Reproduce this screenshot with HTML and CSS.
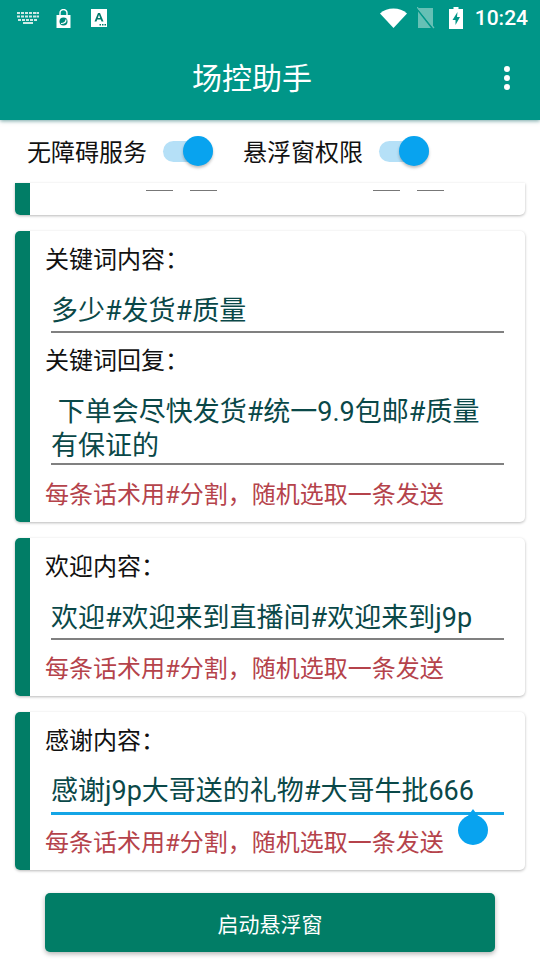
FILE: index.html
```html
<!DOCTYPE html>
<html lang="zh-CN">
<head>
    <meta charset="UTF-8">
    <meta name="viewport" content="width=device-width, initial-scale=1.0">
    <title>场控助手</title>
    <link rel="stylesheet" href="styles.css">
</head>
<body>

<!-- Status bar and toolbar -->
<header class="app-header">
    <div class="status-bar">
        <div class="status-left">
            <svg class="icon-keyboard" width="22" height="12" viewBox="0 0 22 12">
                <g fill="#cfeae6">
                    <rect x="0" y="0" width="3" height="2"/><rect x="4" y="0" width="3" height="2"/><rect x="8" y="0" width="3" height="2"/><rect x="12" y="0" width="3" height="2"/><rect x="16" y="0" width="3" height="2"/><rect x="19.5" y="0" width="2.5" height="2"/>
                    <rect x="0" y="3.5" width="3" height="2"/><rect x="4" y="3.5" width="3" height="2"/><rect x="8" y="3.5" width="3" height="2"/><rect x="12" y="3.5" width="3" height="2"/><rect x="16" y="3.5" width="3" height="2"/><rect x="19.5" y="3.5" width="2.5" height="2"/>
                    <rect x="1" y="7" width="3" height="2"/><rect x="5" y="7" width="3" height="2"/><rect x="9" y="7" width="3" height="2"/><rect x="13" y="7" width="3" height="2"/><rect x="17" y="7" width="3" height="2"/>
                    <rect x="6" y="10" width="10" height="2"/>
                </g>
            </svg>
            <svg class="icon-bag" width="15" height="19" viewBox="0 0 15 19">
                <path d="M4 6V4a3.500 3.500 0 0 1 7 0v2" fill="none" stroke="#fff" stroke-width="1.400"/>
                <path d="M.5 6h14v13H.5z" fill="#fff"/>
                <circle cx="7.500" cy="12.500" r="4" fill="#00897b"/>
                <path d="M5 14.500c3.500 0 5-1.500 5-4" fill="none" stroke="#fff" stroke-width="1.200"/>
            </svg>
            <svg class="icon-app" width="16" height="18" viewBox="0 0 16 18">
                <rect width="16" height="18" fill="#fff"/>
                <path d="M3.500 12.500L7 4h2l3.500 8.500h-2L9.800 10.500H6.200l-.7 2zM6.800 9h2.400L8 5.800z" fill="#00796b"/>
                <rect x="8.500" y="15" width="1.500" height="1.500" fill="#00796b"/><rect x="11" y="15" width="1.500" height="1.500" fill="#00796b"/><rect x="13.500" y="15" width="1.500" height="1.500" fill="#00796b"/>
            </svg>
        </div>
        <div class="status-right">
            <svg class="icon-wifi" width="27" height="20" viewBox="0 0 27 20">
                <path d="M0 5.500C3.500 2 8.500 .5 13.500 .5s10 1.500 13.500 5L13.500 20z" fill="#fff"/>
            </svg>
            <svg class="icon-sim" width="18" height="22" viewBox="0 0 18 22">
                <path d="M1 1h15v20H1z" fill="#66c0b5"/>
                <path d="M1 3l15 19" stroke="#009688" stroke-width="2"/>
                <path d="M0 0l17 21" stroke="#66c0b5" stroke-width="1.300"/>
            </svg>
            <svg class="icon-battery" width="14" height="22" viewBox="0 0 14 22">
                <path d="M4.500 0h5v2H14v20H0V2h4.500z" fill="#fff"/>
                <path d="M8.500 5L3.500 13h3v5l4.500-8H8z" fill="#009688"/>
            </svg>
            <span class="status-time">10:24</span>
        </div>
    </div>
    <div class="toolbar">
        <h1 class="toolbar-title">场控助手</h1>
        <div class="menu-dots"><i></i><i></i><i></i></div>
    </div>
</header>

<!-- Permission switches -->
<div class="switch-row">
    <span class="switch-label">无障碍服务</span>
    <span class="switch"><span class="switch-thumb"></span></span>
    <span class="switch-label second">悬浮窗权限</span>
    <span class="switch"><span class="switch-thumb"></span></span>
</div>

<!-- Settings cards -->
<main class="card-list">
    <section class="card card-clipped">
        <div class="dash-row">
            <span class="dash"></span><span class="dash"></span>
            <span class="dash dash-far"></span><span class="dash"></span>
        </div>
    </section>

    <section class="card">
        <div class="card-label">关键词内容&#xFF1A;</div>
        <div class="field">多少#发货#质量</div>
        <div class="card-label label-next">关键词回复&#xFF1A;</div>
        <div class="field field-multi">&nbsp;下单会尽快发货#统一9.9包邮#质量有保证的</div>
        <div class="hint">每条话术用#分割&#xFF0C;随机选取一条发送</div>
    </section>

    <section class="card">
        <div class="card-label">欢迎内容&#xFF1A;</div>
        <div class="field">欢迎#欢迎来到直播间#欢迎来到j9p</div>
        <div class="hint">每条话术用#分割&#xFF0C;随机选取一条发送</div>
    </section>

    <section class="card">
        <div class="card-label">感谢内容&#xFF1A;</div>
        <div class="field field-active">感谢j9p大哥送的礼物#大哥牛批666
            <span class="cursor-handle"></span>
        </div>
        <div class="hint hint-active">每条话术用#分割&#xFF0C;随机选取一条发送</div>
    </section>
</main>

<button class="start-btn">启动悬浮窗</button>

</body>
</html>
```

FILE: styles.css
```css
/* Page */
* {
    box-sizing: border-box;
}

html, body {
    margin: 0;
    height: 960px;
    overflow: hidden;
}

body {
    background-color: #fff;
    font-family: Roboto, "Noto Sans CJK SC", sans-serif;
    color: #111;
}

/* Header */
.app-header {
    position: relative;
    height: 120px;
    background-color: #009688;
    box-shadow: 0 1px 4px rgba(0, 90, 90, 0.55);
    z-index: 2;
}

.status-bar {
    height: 40px;
    display: flex;
    justify-content: space-between;
    align-items: center;
    padding: 0 12px 4px 17px;
}

.status-left, .status-right {
    display: flex;
    align-items: center;
}

.icon-bag {
    margin-left: 17px;
}

.icon-app {
    margin-left: 20px;
}

.icon-sim {
    margin-left: 10px;
}

.icon-battery {
    margin-left: 14px;
}

.status-time {
    margin-left: 12px;
    font-size: 21px;
    font-weight: 500;
    color: #fff;
}

.toolbar {
    position: relative;
    height: 80px;
    display: flex;
    justify-content: center;
    align-items: center;
    padding: 0 36px 2px 0;
}

.toolbar-title {
    margin: 0;
    font-size: 30px;
    font-weight: 400;
    line-height: 40px;
    color: #fff;
}

.menu-dots {
    position: absolute;
    top: 26px;
    right: 30px;
    display: flex;
    flex-direction: column;
    gap: 3px;
}

.menu-dots i {
    width: 6px;
    height: 6px;
    border-radius: 50%;
    background-color: #fff;
}

/* Switch row */
.switch-row {
    height: 63px;
    display: flex;
    align-items: center;
    padding: 0 0 0 27px;
}

.switch-label {
    padding-top: 2px;
    font-size: 24px;
    line-height: 34px;
}

.switch-label.second {
    margin-left: 30px;
}

.switch {
    position: relative;
    width: 50px;
    height: 21px;
    margin-left: 16px;
    border-radius: 11px;
    background-color: #b5e0f7;
}

.switch-thumb {
    position: absolute;
    top: -5px;
    right: 0;
    width: 30px;
    height: 30px;
    border-radius: 50%;
    background-color: #08a3ef;
    box-shadow: 0 2px 3px rgba(0, 0, 0, 0.25);
}

/* Cards */
.card-list {
    display: flex;
    flex-direction: column;
    gap: 16px;
    padding: 0 15px;
}

.card {
    position: relative;
    padding: 11px 20px 9px 30px;
    background-color: #fff;
    border-radius: 5px;
    box-shadow: 0 1px 3px rgba(0, 0, 0, 0.28);
}

.card::before {
    content: "";
    position: absolute;
    top: 0;
    bottom: 0;
    left: 0;
    width: 15px;
    background-color: #017d66;
    border-radius: 5px 0 0 5px;
}

.card-clipped {
    height: 32px;
    padding: 0;
    border-radius: 0 0 5px 5px;
}

.card-clipped::before {
    border-radius: 0 0 0 5px;
}

.dash-row {
    display: flex;
    padding: 7px 0 0 131px;
}

.dash {
    width: 27px;
    height: 1px;
    margin-right: 17px;
    background-color: #777;
}

.dash-far {
    margin-left: 139px;
}

.card-label {
    font-size: 24px;
    line-height: 36px;
}

.label-next {
    margin-top: 10px;
}

.field {
    position: relative;
    margin: 10px 1px 0 6px;
    padding: 6px 6px 3px 0;
    border-bottom: 2px solid #808080;
    font-size: 27px;
    line-height: 34px;
    color: #0a4848;
}

.field-multi {
    padding-bottom: 0;
}

.field-active {
    border-bottom: 3px solid #14a5e6;
    margin-top: 9px;
    padding-bottom: 4px;
    white-space: nowrap;
}

.hint {
    margin-top: 11px;
    font-size: 24px;
    line-height: 36px;
    color: #b5434b;
}

.field-multi + .hint {
    margin-top: 12px;
}

.hint-active {
    margin-top: 10px;
}

/* Text selection handle */
.cursor-handle {
    position: absolute;
    top: 47px;
    left: 407px;
    width: 30px;
    height: 30px;
    border-radius: 50%;
    background-color: #08a3ef;
}

.cursor-handle::before {
    content: "";
    position: absolute;
    top: -6px;
    left: 5px;
    width: 20px;
    height: 14px;
    background-color: #08a3ef;
    clip-path: polygon(50% 0, 100% 100%, 0 100%);
}

/* Start button */
.start-btn {
    display: block;
    width: 450px;
    height: 59px;
    margin: 23px auto 0;
    border: none;
    border-radius: 5px;
    background-color: #017d66;
    box-shadow: 0 2px 5px rgba(0, 0, 0, 0.3);
    color: #fff;
    font-family: inherit;
    font-size: 21px;
}
```
